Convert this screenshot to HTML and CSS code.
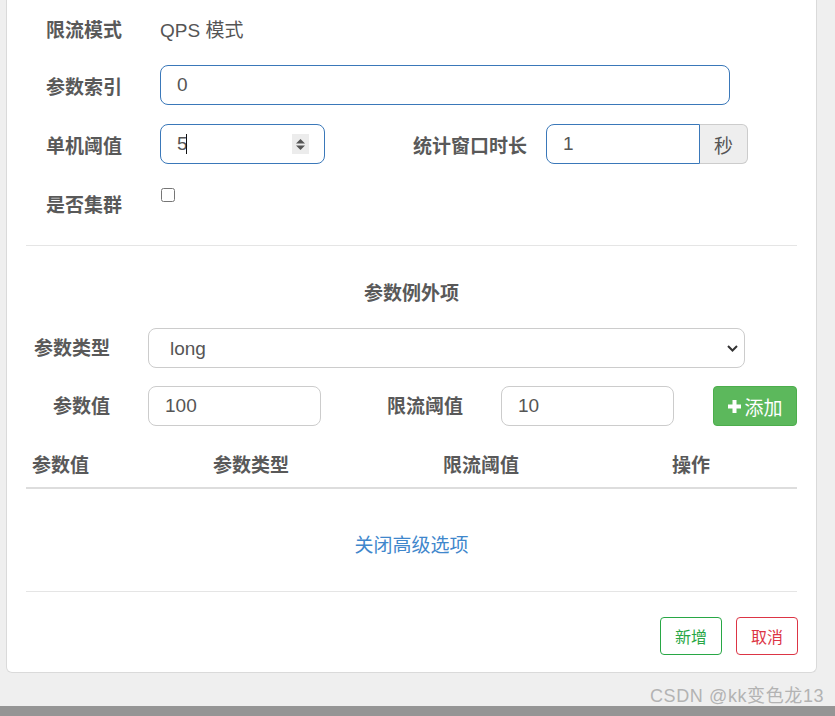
FILE: index.html
```html
<!DOCTYPE html>
<html lang="zh-CN">
<head>
<meta charset="utf-8">
<title>热点规则</title>
<link rel="stylesheet" href="styles.css">
</head>
<body>
<div class="panel">
  <div class="row r1">
    <label class="lbl">限流模式</label>
    <div class="static">QPS 模式</div>
  </div>
  <div class="row">
    <label class="lbl">参数索引</label>
    <input class="ctl focus w-index" type="text" value="0">
  </div>
  <div class="row">
    <label class="lbl">单机阈值</label>
    <div class="ctl focus num">
      <span class="num-val">5</span><span class="caret"></span>
      <span class="spin"><svg width="17" height="20" viewBox="0 0 17 20"><path d="M4 9.5 L8.5 5 L13 9.5 Z" fill="#555"/><path d="M4 11.5 L8.5 16 L13 11.5 Z" fill="#555"/></svg></span>
    </div>
    <label class="lbl lbl-win">统计窗口时长</label>
    <div class="igroup">
      <input class="ctl focus ig-input" type="text" value="1">
      <span class="addon">秒</span>
    </div>
  </div>
  <div class="row r4">
    <label class="lbl">是否集群</label>
    <input class="chk" type="checkbox">
  </div>

  <hr class="sep">

  <h4 class="sub">参数例外项</h4>

  <div class="row2">
    <label class="lbl-r">参数类型</label>
    <div class="ctl sel">
      <select class="sel-native"><option>long</option></select>
      <svg class="chev" width="11" height="7" viewBox="0 0 11 7"><path d="M1 1 L5.5 5.5 L10 1" fill="none" stroke="#333" stroke-width="2"/></svg>
    </div>
  </div>
  <div class="row2">
    <label class="lbl-r">参数值</label>
    <input class="ctl w-val" type="text" value="100">
    <label class="lbl-mid">限流阈值</label>
    <input class="ctl w-val" type="text" value="10">
    <button class="btn-add" type="button"><svg width="13" height="13" viewBox="0 0 13 13"><rect x="4.5" y="0" width="4" height="13" fill="#fff"/><rect x="0" y="4.5" width="13" height="4" fill="#fff"/></svg><span>添加</span></button>
  </div>

  <div class="thead">
    <div class="th">参数值</div>
    <div class="th">参数类型</div>
    <div class="th">限流阈值</div>
    <div class="th">操作</div>
  </div>

  <div class="adv"><a class="adv-link" href="#">关闭高级选项</a></div>

  <hr class="sep">

  <div class="footer">
    <button class="btn-o btn-green" type="button">新增</button>
    <button class="btn-o btn-red" type="button">取消</button>
  </div>
</div>
<div class="bar"></div>
<div class="watermark">CSDN @kk变色龙13</div>
</body>
</html>
```
FILE: styles.css
```css
html, body {
  margin: 0;
  padding: 0;
}
body {
  background: #efefef;
  font-family: "Liberation Sans", "Noto Sans CJK SC", sans-serif;
  color: #555;
  height: 716px;
  overflow: hidden;
  position: relative;
}
.panel {
  margin-left: 6px;
  width: 811px;
  box-sizing: border-box;
  background: #fff;
  border: 1px solid #dadada;
  border-top: 0;
  border-radius: 0 0 6px 6px;
  padding: 8px 19px 17px;
}
.row {
  display: flex;
  align-items: flex-start;
  margin-bottom: 19px;
}
.r1 { margin-bottom: 21px; }
.r4 { margin-bottom: 26px; }
.lbl {
  width: 134px;
  flex: none;
  box-sizing: border-box;
  padding-left: 20px;
  padding-top: 9px;
  font-size: 19px;
  line-height: 27px;
  font-weight: bold;
  color: #595959;
}
.static {
  padding-top: 9px;
  font-size: 19px;
  line-height: 27px;
  color: #555;
}
.ctl {
  height: 40px;
  box-sizing: border-box;
  border: 1px solid #ccc;
  border-radius: 8px;
  background: #fff;
  font-family: "Liberation Sans", "Noto Sans CJK SC", sans-serif;
  font-size: 19px;
  color: #555;
  padding: 0 16px;
  outline: none;
  margin: 0;
}
.focus { border-color: #3a78b9; }
.w-index { width: 570px; }
.num {
  width: 165px;
  display: flex;
  align-items: center;
  padding-right: 0;
}
.num-val { line-height: 22px; }
.caret {
  width: 1px;
  height: 20px;
  background: #111;
  margin-left: -2px;
}
.spin {
  margin-left: auto;
  margin-right: 15px;
  width: 17px;
  height: 20px;
  background: #ececec;
  display: flex;
}
.lbl-win {
  width: auto;
  padding-left: 0;
  margin-left: 88px;
  margin-right: 19px;
}
.igroup {
  display: flex;
}
.ig-input {
  width: 154px;
  border-radius: 8px 0 0 8px;
}
.addon {
  width: 48px;
  height: 40px;
  box-sizing: border-box;
  background: #eee;
  border: 1px solid #ccc;
  border-left: 0;
  border-radius: 0 6px 6px 0;
  display: flex;
  align-items: center;
  justify-content: center;
  font-size: 19px;
  color: #555;
}
.chk {
  width: 14px;
  height: 14px;
  margin: 5px 0 0 1px;
}
.sep {
  border: 0;
  border-top: 1px solid #e5e5e5;
  margin: 0;
}
.sub {
  margin: 34px 0 21px;
  text-align: center;
  font-size: 19px;
  line-height: 27px;
  font-weight: bold;
  color: #595959;
}
.row2 {
  display: flex;
  align-items: flex-start;
  margin-bottom: 18px;
}
.lbl-r {
  width: 84px;
  flex: none;
  text-align: right;
  margin-right: 38px;
  padding-top: 7px;
  font-size: 19px;
  line-height: 27px;
  font-weight: bold;
  color: #595959;
}
.lbl-mid {
  margin-left: 66px;
  margin-right: 38px;
  padding-top: 7px;
  font-size: 19px;
  line-height: 27px;
  font-weight: bold;
  color: #595959;
}
.sel {
  width: 597px;
  display: flex;
  align-items: center;
  padding: 0 6px 0 21px;
}
.sel-native {
  appearance: none;
  -webkit-appearance: none;
  border: 0;
  background: transparent;
  flex: 1;
  padding: 0;
  font-family: "Liberation Sans", "Noto Sans CJK SC", sans-serif;
  font-size: 19px;
  color: #555;
  outline: none;
}
.w-val { width: 173px; }
.btn-add {
  margin-left: 39px;
  width: 84px;
  height: 40px;
  box-sizing: border-box;
  background: #5cb85c;
  border: 1px solid #4cae4c;
  border-radius: 4px;
  color: #fff;
  font-family: "Liberation Sans", "Noto Sans CJK SC", sans-serif;
  font-size: 19px;
  display: flex;
  align-items: center;
  justify-content: center;
  gap: 4px;
  padding: 0;
}
.thead {
  margin-top: 17px;
  display: grid;
  grid-template-columns: 181px 230px 229px 131px;
  border-bottom: 2px solid #ddd;
}
.th {
  padding: 8px 6px;
  font-size: 19px;
  line-height: 27px;
  font-weight: bold;
  color: #595959;
}
.adv {
  text-align: center;
  padding: 43px 0 31px;
  line-height: 27px;
}
.adv-link {
  font-size: 19px;
  color: #3f87cc;
  text-decoration: none;
}
.footer {
  display: flex;
  justify-content: flex-end;
  gap: 14px;
  margin-top: 25px;
  margin-right: -1px;
}
.btn-o {
  width: 62px;
  height: 38px;
  box-sizing: border-box;
  background: #fff;
  border: 1px solid;
  border-radius: 4px;
  font-family: "Liberation Sans", "Noto Sans CJK SC", sans-serif;
  font-size: 16px;
  padding: 0;
}
.btn-green { color: #28a745; border-color: #28a745; }
.btn-red { color: #dc3545; border-color: #dc3545; }
.bar {
  margin-top: 33px;
  height: 10px;
  background: #959595;
}
.watermark {
  position: absolute;
  left: 650px;
  top: 685px;
  font-size: 18px;
  line-height: 22px;
  letter-spacing: 0.6px;
  color: #b3b3b3;
  white-space: nowrap;
}
```
